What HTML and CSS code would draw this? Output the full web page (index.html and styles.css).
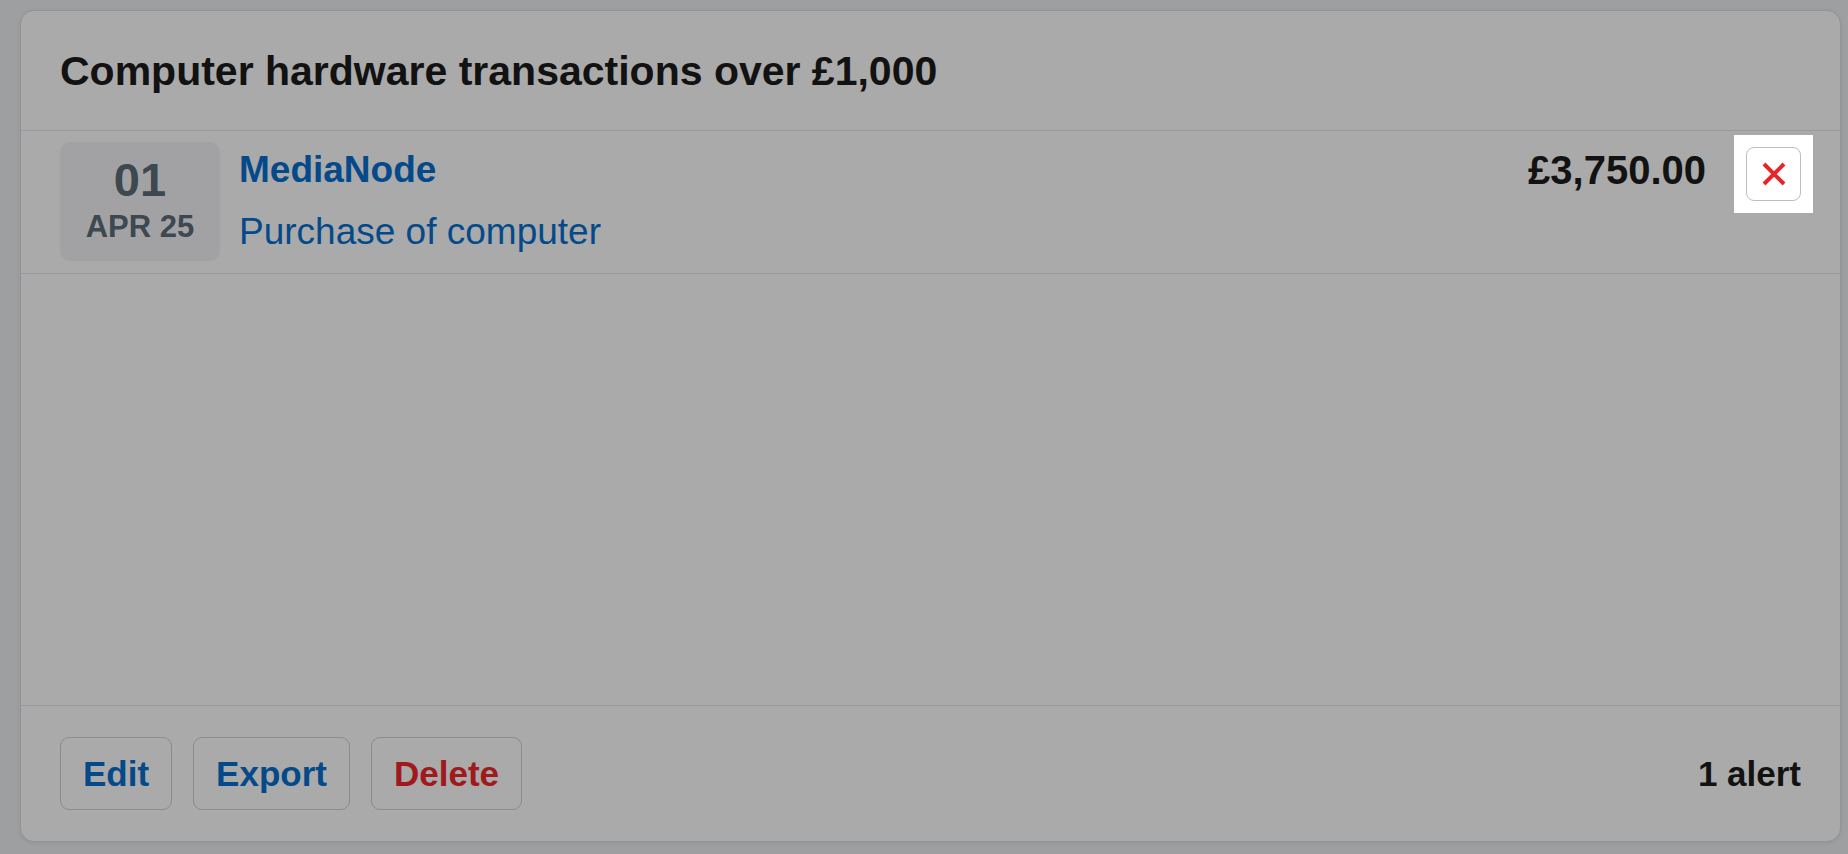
FILE: index.html
```html
<!DOCTYPE html>
<html lang="en">
<head>
<meta charset="utf-8">
<title>Computer hardware transactions over £1,000</title>
<link rel="stylesheet" href="styles.css">
</head>
<body>
<div class="card">
  <div class="card-header">
    <h2 class="title">Computer hardware transactions over £1,000</h2>
  </div>
  <div class="card-body">
    <div class="txn">
      <div class="date">
        <span class="day">01</span>
        <span class="month">APR 25</span>
      </div>
      <div class="details">
        <a class="merchant">MediaNode</a>
        <span class="desc">Purchase of computer</span>
      </div>
      <div class="amount">£3,750.00</div>
      <div class="spotlight">
        <button class="remove" aria-label="Remove">
          <svg width="24" height="24" viewBox="0 0 24 24" aria-hidden="true">
            <path d="M2 2 L22 22 M22 2 L2 22" stroke="#e5252a" stroke-width="4" fill="none" stroke-linecap="butt"/>
          </svg>
        </button>
      </div>
    </div>
  </div>
  <div class="card-footer">
    <div class="actions">
      <button class="btn">Edit</button>
      <button class="btn">Export</button>
      <button class="btn btn-danger">Delete</button>
    </div>
    <span class="count">1 alert</span>
  </div>
</div>
</body>
</html>
```
FILE: styles.css
```css
html {
  background: #edeff2;
}
body {
  margin: 0;
  padding: 10px 7px 12px 20px;
  font-family: "Liberation Sans", Arial, sans-serif;
  color: #1a1a1a;
}
.card {
  box-sizing: border-box;
  height: calc(100vh - 22px);
  background: #fff;
  border: 1px solid #dcdee3;
  border-radius: 14px;
  box-shadow: 0 1px 4px rgba(0, 0, 0, 0.08);
  display: flex;
  flex-direction: column;
}
.card-header {
  height: 119px;
  display: flex;
  align-items: center;
  padding: 0 39px;
  border-bottom: 1px solid #e6e6ee;
}
.title {
  margin: 0;
  font-size: 41px;
  line-height: 46px;
  font-weight: 700;
  color: #1b1b1b;
}
.card-body {
  flex: 1;
}
.txn {
  display: flex;
  align-items: flex-start;
  padding: 11px 39px 12px;
  border-bottom: 1px solid #e6e6ee;
}
.date {
  box-sizing: border-box;
  width: 160px;
  height: 119px;
  padding-top: 14px;
  background: #f3f4f6;
  border-radius: 10px;
  display: flex;
  flex-direction: column;
  align-items: center;
  color: #5c6c78;
  font-weight: 700;
}
.day {
  font-size: 47px;
  line-height: 48px;
}
.month {
  font-size: 31px;
  line-height: 34px;
  margin-top: 6px;
}
.details {
  flex: 1;
  margin-left: 19px;
  display: flex;
  flex-direction: column;
}
.merchant {
  font-size: 37px;
  line-height: 56px;
  font-weight: 700;
  color: #0670d0;
}
.desc {
  font-size: 37px;
  line-height: 56px;
  margin-top: 6px;
  color: #0670d0;
}
.amount {
  font-size: 40px;
  line-height: 56px;
  font-weight: 700;
  color: #1b1b1b;
}
.spotlight {
  position: relative;
  z-index: 10;
  background: #fff;
  padding: 12px;
  margin: -7px -12px 0 28px;
  box-shadow: 0 0 0 4000px rgba(0, 0, 0, 0.333);
}
.remove {
  box-sizing: border-box;
  width: 55px;
  height: 54px;
  padding: 0;
  display: flex;
  align-items: center;
  justify-content: center;
  background: #fff;
  border: 1px solid #b9bfc6;
  border-radius: 8px;
}
.card-footer {
  height: 135px;
  display: flex;
  align-items: center;
  justify-content: space-between;
  padding: 0 39px;
  border-top: 1px solid #e6e6ee;
}
.actions {
  display: flex;
  gap: 21px;
}
.btn {
  font-family: inherit;
  font-size: 35px;
  font-weight: 700;
  line-height: 41px;
  padding: 15px 22px;
  border: 1px solid #cfd1d5;
  border-radius: 9px;
  background: #fff;
  color: #0670d0;
}
.btn-danger {
  color: #f0282c;
}
.count {
  font-size: 35px;
  font-weight: 700;
  color: #1b1b1b;
}
```
